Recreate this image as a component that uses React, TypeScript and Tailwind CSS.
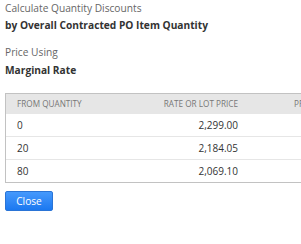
import React from 'react';

const ROWS = [
  { from: '0', rate: '2,299.00' },
  { from: '20', rate: '2,184.05' },
  { from: '80', rate: '2,069.10' },
];

const App: React.FC = () => {
  return (
    <div
      className="w-[301px] h-[244px] overflow-hidden bg-white pl-[5px]"
      style={{ fontFamily: '"Open Sans", sans-serif' }}
    >
      <div className="text-[10.2px] leading-[17px] text-[#666]">Calculate Quantity Discounts</div>
      <div className="text-[10.2px] leading-[17px] font-bold text-[#333]">
        by Overall Contracted PO Item Quantity
      </div>
      <div className="mt-[10px] text-[10.2px] leading-[17px] text-[#666]">Price Using</div>
      <div className="mt-[1px] text-[10.2px] leading-[17px] font-bold text-[#333]">Marginal Rate</div>

      <div className="mt-[14px] w-[340px] border border-[#c2c2c2]">
        <div className="flex h-[20px] items-center whitespace-nowrap bg-[#e6e6e6] pt-[1px] text-[8.2px] uppercase text-[#777]">
          <div className="w-[110px] shrink-0 pl-[11px]">From Quantity</div>
          <div className="w-[122px] shrink-0 text-right">Rate or Lot Price</div>
          <div className="ml-[56px] shrink-0">Price</div>
        </div>
        {ROWS.map((r, i) => (
          <div
            key={i}
            className={`flex items-center text-[10px] text-[#333] ${i > 0 ? 'h-[23px] border-t border-[#e6e6e6]' : 'h-[22px]'}`}
          >
            <div className="w-[110px] pl-[11px]">{r.from}</div>
            <div className="w-[122px] text-right">{r.rate}</div>
          </div>
        ))}
      </div>

      <button className="mt-[8px] flex h-[20px] w-[48px] items-center justify-center rounded-[2px] border border-[#2a74d6] bg-gradient-to-b from-[#4599fc] to-[#1a78f0] text-[10.2px] leading-none text-white">
        Close
      </button>
    </div>
  );
};

export default App;
